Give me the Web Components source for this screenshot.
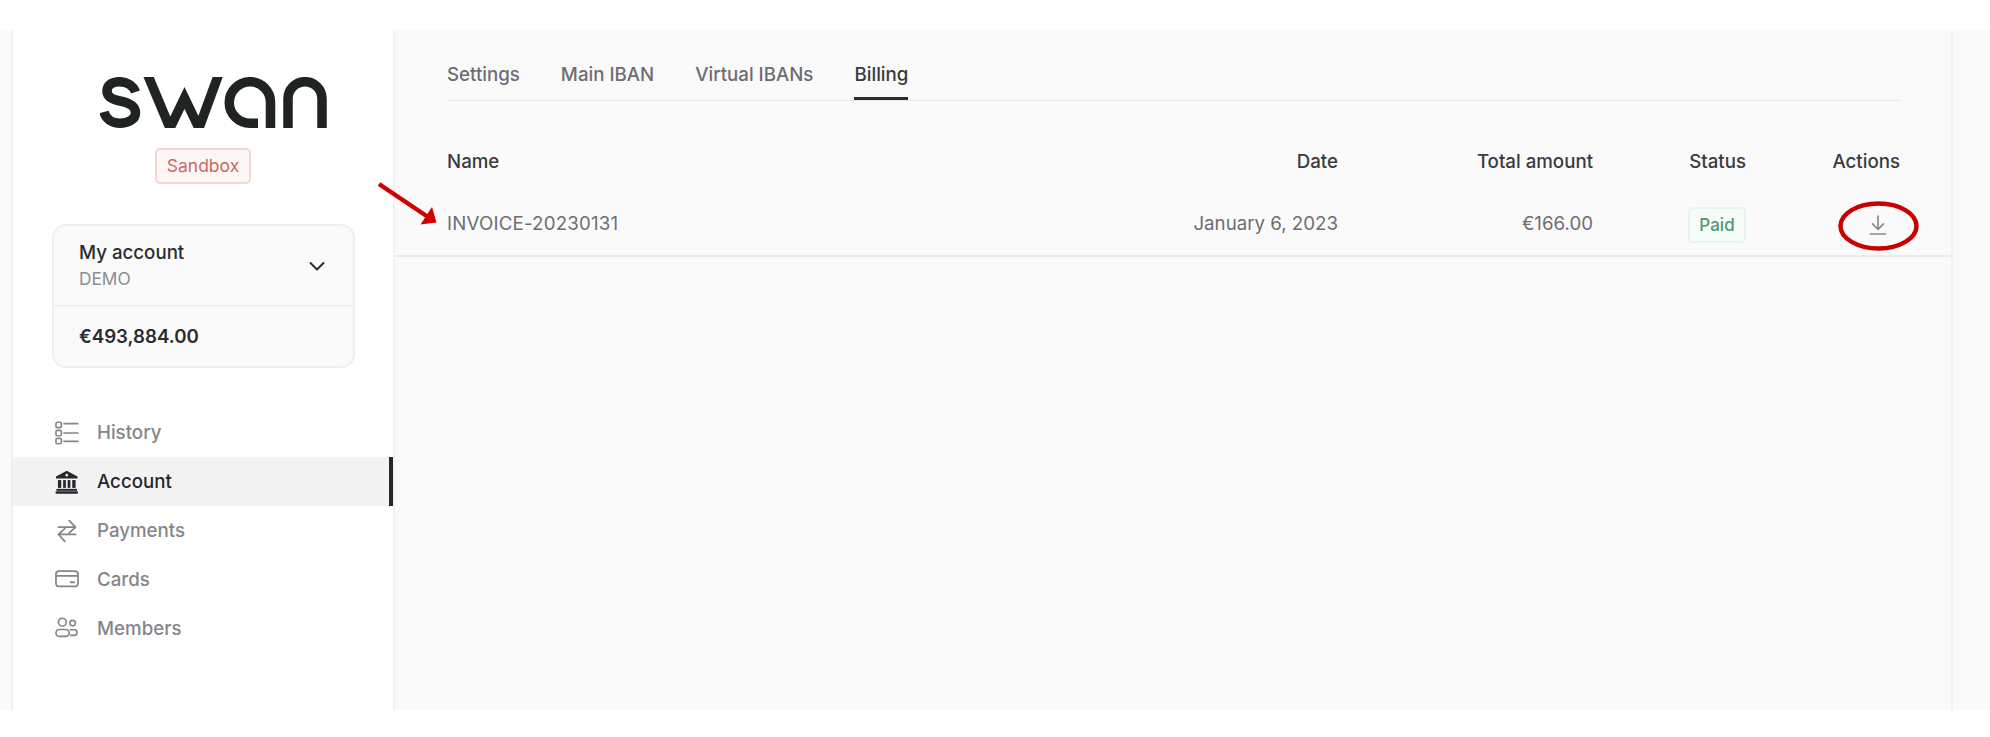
<!DOCTYPE html>
<html lang="en">
<head>
<meta charset="utf-8">
<title>Swan billing</title>
<style>
  html, body { margin: 0; height: 100%; background: #fff; }
  body { font-family: Inter, "Liberation Sans", sans-serif; overflow: hidden; }
</style>
</head>
<body>
<swan-app>
  <swan-sidebar slot="sidebar">
    <swan-logo></swan-logo>
    <account-card name="My account" holder="DEMO" balance="€493,884.00"></account-card>
    <nav-item icon="history">History</nav-item>
    <nav-item icon="account" active>Account</nav-item>
    <nav-item icon="payments">Payments</nav-item>
    <nav-item icon="cards">Cards</nav-item>
    <nav-item icon="members">Members</nav-item>
  </swan-sidebar>
  <tab-bar>
    <tab-item>Settings</tab-item>
    <tab-item>Main IBAN</tab-item>
    <tab-item>Virtual IBANs</tab-item>
    <tab-item active>Billing</tab-item>
  </tab-bar>
  <invoice-table>
    <invoice-row name="INVOICE-20230131" date="January 6, 2023" amount="€166.00" status="Paid"></invoice-row>
  </invoice-table>
</swan-app>
<call-outs></call-outs>

<script>
  // Small helper so every element sets up its shadow root the same way
  class ShadowEl extends HTMLElement {
    constructor() {
      super();
      this.attachShadow({ mode: 'open' });
    }
  }

  class SwanApp extends ShadowEl {
    connectedCallback() {
      this.shadowRoot.innerHTML = `
        <style>
          :host { display: block; padding-top: 30px; box-sizing: border-box; }
          .frame { display: grid; grid-template-columns: 11px 384px 1558px 1fr; height: 680px; background: #fafafa; }
          main { border-right: 2px solid #f1f1f1; min-width: 0; }
        </style>
        <div class="frame">
          <div></div>
          <slot name="sidebar"></slot>
          <main><slot></slot></main>
          <div></div>
        </div>`;
    }
  }

  class SwanSidebar extends ShadowEl {
    connectedCallback() {
      this.shadowRoot.innerHTML = `
        <style>
          :host { display: block; background: #fff; border-left: 2px solid #f1f1f1; border-right: 2px solid #f1f1f1; }
        </style>
        <slot></slot>`;
    }
  }

  // The wordmark is a drawing of the logo, the Sandbox tag under it is text
  class SwanLogo extends ShadowEl {
    connectedCallback() {
      this.shadowRoot.innerHTML = `
        <style>
          :host { display: flex; flex-direction: column; align-items: center; padding-top: 47px; height: 147px; box-sizing: content-box; }
          svg { display: block; width: 228px; height: 51px; margin-left: 21px; }
          .tag {
            margin-top: 20px; height: 36px; box-sizing: border-box; padding: 0 10px;
            display: flex; align-items: center;
            font-size: 17.5px; line-height: 1; color: #c96a64;
            background: #fdf6f4; border: 2px solid #f3d6cf; border-radius: 5px;
          }
        </style>
        <svg viewBox="100 77 228 51" role="img" aria-label="swan">
          <defs><clipPath id="band"><rect x="100" y="77" width="228" height="51"/></clipPath></defs>
          <g clip-path="url(#band)" fill="none" stroke="#1f2322" stroke-width="9.500">
            <path d="M135.500 92C133 85 126 81.700 119.500 81.700C111 81.700 107 86 107 91C107 97 112 99.500 120 101C130 103 135.500 106 135.500 113C135.500 119.500 128 123.200 120 123.200C112 123.200 106 119.500 104 112"/>
            <path d="M146.500 72L170 128L184.500 98L199 128L219.500 72"/>
            <path d="M258 123.200H250A20.700 20.700 0 0 1 250 81.700A20.500 20.500 0 0 1 270.500 102.500V130"/>
            <path d="M288 130V98.700A17 17 0 0 1 322 98.700V130"/>
          </g>
        </svg>
        <div class="tag">Sandbox</div>`;
    }
  }

  class AccountCard extends ShadowEl {
    connectedCallback() {
      this.shadowRoot.innerHTML = `
        <style>
          :host { display: block; margin: 0 38px 40px 39px; background: #fafafa; border: 2px solid #efefef; border-radius: 14px; height: 144px; box-sizing: border-box; }
          .top { height: 81px; box-sizing: border-box; padding: 0 27px 2px 25px; border-bottom: 2px solid #efefef; display: flex; align-items: center; justify-content: space-between; }
          .name { font-size: 18.700px; font-weight: 500; line-height: 27px; color: #2b2b31; }
          .holder { font-size: 17.300px; line-height: 24px; color: #8c8c92; padding-top: 1px; }
          .balance { padding: 16px 25px 0; font-size: 18.700px; font-weight: 600; line-height: 27px; color: #2b2b31; }
          svg { width: 18px; height: 12px; display: block; margin-top: 2px; }
        </style>
        <div class="top">
          <div>
            <div class="name">${this.getAttribute('name')}</div>
            <div class="holder">${this.getAttribute('holder')}</div>
          </div>
          <svg viewBox="0 0 18 12" fill="none" stroke="#2b2b31" stroke-width="2" stroke-linecap="round" stroke-linejoin="round"><path d="M2.500 3L9 9.500L15.500 3"/></svg>
        </div>
        <div class="balance">${this.getAttribute('balance')}</div>`;
    }
  }

  const NAV_ICONS = {
    history: `<g fill="none" stroke="currentColor" stroke-width="1.700">
        <rect x="1" y="1" width="5.500" height="5.500" rx="1.500"/><rect x="1" y="9.300" width="5.500" height="5.500" rx="1.500"/><rect x="1" y="17.500" width="5.500" height="5.500" rx="1.500"/>
        <path d="M8.500 2.500H24M8.500 12H24M8.500 20.500H24"/></g>`,
    account: `<g fill="currentColor">
        <path d="M12 0.500L23 6.500V8.500H1V6.500Z"/><circle cx="12" cy="5" r="1.300" fill="#f3f3f3"/>
        <rect x="3" y="10" width="3.400" height="8"/><rect x="8.300" y="10" width="2.800" height="8"/><rect x="12.900" y="10" width="2.800" height="8"/><rect x="17.600" y="10" width="3.400" height="8"/>
        <rect x="1.500" y="19" width="21" height="2"/><rect x="0.500" y="21.500" width="23" height="2.500" rx="1"/></g>`,
    payments: `<g fill="none" stroke="currentColor" stroke-width="1.800" stroke-linecap="round" stroke-linejoin="round">
        <path d="M3.500 8H21M14.500 1.500L21 8L14.500 14"/><path d="M21 15.500H3.500M10 9.500L3.500 15.500L10 22.500"/></g>`,
    cards: `<g fill="none" stroke="currentColor" stroke-width="1.800">
        <rect x="1" y="3" width="22.500" height="15.500" rx="3"/><path d="M1 7.800H23.500"/><path d="M16 14.300H19.500" stroke-linecap="round"/></g>`,
    members: `<g fill="none" stroke="currentColor" stroke-width="1.700">
        <circle cx="7.500" cy="5" r="4"/><circle cx="18" cy="6" r="2.800"/>
        <rect x="1" y="12.500" width="13.500" height="7" rx="3.500"/><path d="M15 12.800H20.500A3 3 0 0 1 20.500 18.500H15.500"/></g>`
  };

  class NavItem extends ShadowEl {
    connectedCallback() {
      const icon = NAV_ICONS[this.getAttribute('icon')];
      this.shadowRoot.innerHTML = `
        <style>
          :host { display: flex; align-items: center; gap: 18px; height: 49px; box-sizing: border-box; padding-left: 42px; color: #85858b; font-size: 18.700px; font-weight: 500; position: relative; }
          :host([active]) { background: #f3f3f3; color: #26262c; border-right: 4px solid #26262c; }
          svg { width: 24px; height: 24px; flex: none; display: block; }
        </style>
        <svg viewBox="0 0 24.500 24">${icon}</svg>
        <slot></slot>`;
    }
  }

  class TabBar extends ShadowEl {
    connectedCallback() {
      this.shadowRoot.innerHTML = `
        <style>
          :host { display: flex; gap: 41px; margin: 0 51px 0 52px; height: 71px; box-sizing: border-box; border-bottom: 1px solid #e9e9e9; align-items: flex-end; }
        </style>
        <slot></slot>`;
    }
  }

  class TabItem extends ShadowEl {
    connectedCallback() {
      this.shadowRoot.innerHTML = `
        <style>
          :host { display: block; height: 45px; box-sizing: border-box; padding-top: 6px; font-size: 18.700px; font-weight: 500; line-height: 27px; color: #6d6d73; }
          :host([active]) { color: #38383e; border-bottom: 3px solid #2b2b31; }
        </style>
        <slot></slot>`;
    }
  }

  class InvoiceTable extends ShadowEl {
    connectedCallback() {
      this.shadowRoot.innerHTML = `
        <style>
          :host { display: block; }
          .head {
            display: grid; grid-template-columns: 1fr 200px 255px 153px 154px;
            padding: 30px 51px 0 52px; height: 90px; align-items: center; box-sizing: border-box;
            font-size: 18.700px; font-weight: 500; color: #3a3a40;
          }
          .r { text-align: right; }
        </style>
        <div class="head">
          <div>Name</div><div class="r">Date</div><div class="r">Total amount</div><div class="r">Status</div><div class="r">Actions</div>
        </div>
        <slot></slot>`;
    }
  }

  class InvoiceRow extends ShadowEl {
    connectedCallback() {
      const a = n => this.getAttribute(n);
      this.shadowRoot.innerHTML = `
        <style>
          :host { display: grid; grid-template-columns: 1fr 200px 255px 153px 154px; align-items: center; height: 66px; box-sizing: border-box; padding: 0 51px 0 52px; border-bottom: 2px solid #ebebeb; font-size: 18.700px; color: #6d6d73; }
          .name { letter-spacing: 0.2px; }
          .r { text-align: right; }
          .status { display: flex; justify-content: flex-end; padding-top: 3px; }
          .actions { display: flex; justify-content: flex-end; padding: 3px 12px 0 0; }
          svg { width: 20px; height: 22px; display: block; }
        </style>
        <div class="name">${a('name')}</div>
        <div class="r">${a('date')}</div>
        <div class="r">${a('amount')}</div>
        <div class="status"><status-badge>${a('status')}</status-badge></div>
        <div class="actions">
          <svg viewBox="0 0 20 22" fill="none" stroke="#8a8a8f" stroke-width="1.700" stroke-linecap="round" stroke-linejoin="round"><path d="M10 2V15M4.500 9.800L10 15.300L15.500 9.800M2.500 20H17.500"/></svg>
        </div>`;
    }
  }

  class StatusBadge extends ShadowEl {
    connectedCallback() {
      this.shadowRoot.innerHTML = `
        <style>
          :host { display: flex; align-items: center; justify-content: center; width: 58px; height: 36px; box-sizing: border-box; font-size: 17px; font-weight: 500; color: #4f9a6d; background: #f6fdf8; border: 2px solid #e6f6ea; border-radius: 5px; }
        </style>
        <slot></slot>`;
    }
  }

  // Red arrow and ellipse were drawn over the screenshot, so they sit on top of the page
  class CallOuts extends ShadowEl {
    connectedCallback() {
      this.shadowRoot.innerHTML = `
        <style>
          :host { position: absolute; left: 0; top: 0; width: 1990px; height: 737px; pointer-events: none; }
          svg { display: block; width: 100%; height: 100%; }
        </style>
        <svg viewBox="0 0 1990 737">
          <path d="M379 184L428 217" stroke="#d00000" stroke-width="4.500" fill="none"/>
          <path d="M436.500 222.500L420.500 224.500L432 207Z" fill="#d00000"/>
          <ellipse cx="1878.500" cy="226" rx="38" ry="22.500" fill="none" stroke="#c80000" stroke-width="4.500"/>
        </svg>`;
    }
  }

  customElements.define('swan-app', SwanApp);
  customElements.define('swan-sidebar', SwanSidebar);
  customElements.define('swan-logo', SwanLogo);
  customElements.define('account-card', AccountCard);
  customElements.define('nav-item', NavItem);
  customElements.define('tab-bar', TabBar);
  customElements.define('tab-item', TabItem);
  customElements.define('invoice-table', InvoiceTable);
  customElements.define('invoice-row', InvoiceRow);
  customElements.define('status-badge', StatusBadge);
  customElements.define('call-outs', CallOuts);
</script>
</body>
</html>
